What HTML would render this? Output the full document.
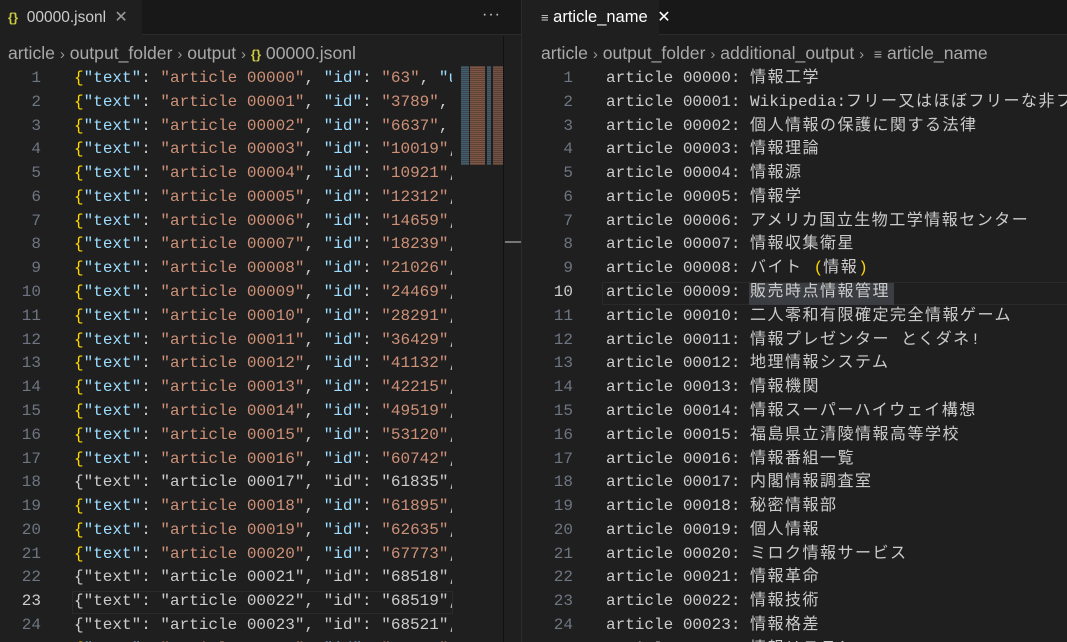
<!DOCTYPE html>
<html><head><meta charset="utf-8"><style>
*{margin:0;padding:0;box-sizing:border-box}
html{width:1067px;height:642px;overflow:hidden}
body{width:1067px;height:642px;background:#1f1f1f;overflow:hidden;position:relative;font-family:"Liberation Sans","Noto Sans CJK JP",sans-serif;color:#cccccc}
.tabbar{position:absolute;top:0;height:35px;background:#181818;border-bottom:1px solid #2b2b2b}
.tab{position:absolute;top:0;height:35px;background:#1f1f1f;font-size:15.5px;line-height:35px;color:#ffffff;white-space:nowrap}
.crumb{position:absolute;top:42px;font-size:17.6px;color:#a9a9a9;white-space:nowrap;line-height:22px}
.cv{color:#999;font-size:15px}
.code{position:absolute;top:67px;font-family:"Liberation Mono","Noto Sans CJK JP",monospace;font-size:16px;line-height:23.78px;white-space:pre;overflow:hidden;height:575px}
.ln{position:absolute;top:67px;font-family:"Liberation Mono",monospace;font-size:16px;line-height:23.78px;color:#6e7681;text-align:right;white-space:pre;height:575px;overflow:hidden}
.b{color:#ffd700}.k{color:#9cdcfe}.s{color:#ce9178}
.j{letter-spacing:1.5px}
</style></head><body>
<div class="tabbar" style="left:0;width:521px"></div>
<div class="tab" style="left:0;width:142px;padding-left:8px;color:#cccccc"><span style="color:#cbcb41;font-weight:bold;font-size:13px">{}</span>&nbsp; 00000.jsonl <span style="color:#9d9d9d;margin-left:4px;font-size:16px">✕</span></div>
<div style="position:absolute;left:482px;top:6px;font-size:16px;color:#cccccc;letter-spacing:1px">···</div>
<div class="crumb" style="left:8px">article <span class="cv">›</span> output_folder <span class="cv">›</span> output <span class="cv">›</span> <span style="color:#cbcb41;font-weight:bold;font-size:13px">{}</span> 00000.jsonl</div>
<div class="ln" style="left:0;width:41px">1
2
3
4
5
6
7
8
9
10
11
12
13
14
15
16
17
18
19
20
21
22
<span style="color:#ccc">23</span>
24
25</div>
<div style="position:absolute;left:72px;top:591px;width:381px;height:23px;border:1px solid #2a2a2a"></div>
<div class="code" style="left:74px;width:378px;color:#cccccc"><span class="b">{</span><span class="k">"text"</span>: <span class="s">"article 00000"</span>, <span class="k">"id"</span>: <span class="s">"63"</span>, <span class="k">"url"</span>
<span class="b">{</span><span class="k">"text"</span>: <span class="s">"article 00001"</span>, <span class="k">"id"</span>: <span class="s">"3789"</span>, <span class="k">"url"</span>
<span class="b">{</span><span class="k">"text"</span>: <span class="s">"article 00002"</span>, <span class="k">"id"</span>: <span class="s">"6637"</span>, <span class="k">"url"</span>
<span class="b">{</span><span class="k">"text"</span>: <span class="s">"article 00003"</span>, <span class="k">"id"</span>: <span class="s">"10019"</span>,
<span class="b">{</span><span class="k">"text"</span>: <span class="s">"article 00004"</span>, <span class="k">"id"</span>: <span class="s">"10921"</span>,
<span class="b">{</span><span class="k">"text"</span>: <span class="s">"article 00005"</span>, <span class="k">"id"</span>: <span class="s">"12312"</span>,
<span class="b">{</span><span class="k">"text"</span>: <span class="s">"article 00006"</span>, <span class="k">"id"</span>: <span class="s">"14659"</span>,
<span class="b">{</span><span class="k">"text"</span>: <span class="s">"article 00007"</span>, <span class="k">"id"</span>: <span class="s">"18239"</span>,
<span class="b">{</span><span class="k">"text"</span>: <span class="s">"article 00008"</span>, <span class="k">"id"</span>: <span class="s">"21026"</span>,
<span class="b">{</span><span class="k">"text"</span>: <span class="s">"article 00009"</span>, <span class="k">"id"</span>: <span class="s">"24469"</span>,
<span class="b">{</span><span class="k">"text"</span>: <span class="s">"article 00010"</span>, <span class="k">"id"</span>: <span class="s">"28291"</span>,
<span class="b">{</span><span class="k">"text"</span>: <span class="s">"article 00011"</span>, <span class="k">"id"</span>: <span class="s">"36429"</span>,
<span class="b">{</span><span class="k">"text"</span>: <span class="s">"article 00012"</span>, <span class="k">"id"</span>: <span class="s">"41132"</span>,
<span class="b">{</span><span class="k">"text"</span>: <span class="s">"article 00013"</span>, <span class="k">"id"</span>: <span class="s">"42215"</span>,
<span class="b">{</span><span class="k">"text"</span>: <span class="s">"article 00014"</span>, <span class="k">"id"</span>: <span class="s">"49519"</span>,
<span class="b">{</span><span class="k">"text"</span>: <span class="s">"article 00015"</span>, <span class="k">"id"</span>: <span class="s">"53120"</span>,
<span class="b">{</span><span class="k">"text"</span>: <span class="s">"article 00016"</span>, <span class="k">"id"</span>: <span class="s">"60742"</span>,
{"text": "article 00017", "id": "61835",
<span class="b">{</span><span class="k">"text"</span>: <span class="s">"article 00018"</span>, <span class="k">"id"</span>: <span class="s">"61895"</span>,
<span class="b">{</span><span class="k">"text"</span>: <span class="s">"article 00019"</span>, <span class="k">"id"</span>: <span class="s">"62635"</span>,
<span class="b">{</span><span class="k">"text"</span>: <span class="s">"article 00020"</span>, <span class="k">"id"</span>: <span class="s">"67773"</span>,
{"text": "article 00021", "id": "68518",
{"text": "article 00022", "id": "68519",
{"text": "article 00023", "id": "68521",
<span class="b">{</span><span class="k">"text"</span>: <span class="s">"article 00024"</span>, <span class="k">"id"</span>: <span class="s">"68522"</span>,</div>
<div style="position:absolute;left:461px;top:66px;width:42px;height:99px;background:linear-gradient(90deg,#4a6475 0,#4a6475 8px,transparent 8px,transparent 9px,#8a5c4a 9px,#8a5c4a 24px,transparent 24px,transparent 26px,#4a6475 26px,#4a6475 30px,transparent 30px,transparent 32px,#7d5748 32px,#7d5748 42px);opacity:.9"></div>
<div style="position:absolute;left:461px;top:66px;width:42px;height:99px;background:repeating-linear-gradient(180deg,rgba(31,31,31,.35) 0,rgba(31,31,31,.35) 1px,transparent 1px,transparent 2px)"></div>
<div style="position:absolute;left:503px;top:36px;width:1px;height:606px;background:#111"></div>
<div style="position:absolute;left:505px;top:241px;width:16px;height:2px;background:#777"></div>
<div style="position:absolute;left:521px;top:0;width:1px;height:642px;background:#2b2b2b"></div>
<div class="tabbar" style="left:522px;width:545px"></div>
<div class="tab" style="left:522px;width:137px;padding-left:19px;font-size:16.5px"><span style="color:#cccccc;font-size:13px">≡</span>&nbsp;article_name <span style="margin-left:5px;font-size:16px">✕</span></div>
<div class="crumb" style="left:541px">article <span class="cv">›</span> output_folder <span class="cv">›</span> additional_output <span class="cv">›</span> &nbsp;<span style="font-size:14px">≡</span> article_name</div>
<div class="ln" style="left:522px;width:51px">1
2
3
4
5
6
7
8
9
<span style="color:#ccc">10</span>
11
12
13
14
15
16
17
18
19
20
21
22
23
24
25</div>
<div style="position:absolute;left:602px;top:282px;width:465px;height:23px;border:1px solid #2a2a2a;border-right:none"></div>
<div style="position:absolute;left:749px;top:283px;width:145px;height:22px;background:#3a3d41"></div>
<div class="code" style="left:606px;width:461px;color:#cccccc">article 00000: <span class="j">情報工学</span>
article 00001: Wikipedia:<span class="j">フリー又はほぼフリーな非フリー</span>
article 00002: <span class="j">個人情報の保護に関する法律</span>
article 00003: <span class="j">情報理論</span>
article 00004: <span class="j">情報源</span>
article 00005: <span class="j">情報学</span>
article 00006: <span class="j">アメリカ国立生物工学情報センター</span>
article 00007: <span class="j">情報収集衛星</span>
article 00008: <span class="j">バイト </span><span class="b">(</span><span class="j">情報</span><span class="b">)</span>
article 00009: <span class="j">販売時点情報管理</span>
article 00010: <span class="j">二人零和有限確定完全情報ゲーム</span>
article 00011: <span class="j">情報プレゼンター とくダネ!</span>
article 00012: <span class="j">地理情報システム</span>
article 00013: <span class="j">情報機関</span>
article 00014: <span class="j">情報スーパーハイウェイ構想</span>
article 00015: <span class="j">福島県立清陵情報高等学校</span>
article 00016: <span class="j">情報番組一覧</span>
article 00017: <span class="j">内閣情報調査室</span>
article 00018: <span class="j">秘密情報部</span>
article 00019: <span class="j">個人情報</span>
article 00020: <span class="j">ミロク情報サービス</span>
article 00021: <span class="j">情報革命</span>
article 00022: <span class="j">情報技術</span>
article 00023: <span class="j">情報格差</span>
article 00024: <span class="j">情報リテラシー</span></div>
</body></html>
